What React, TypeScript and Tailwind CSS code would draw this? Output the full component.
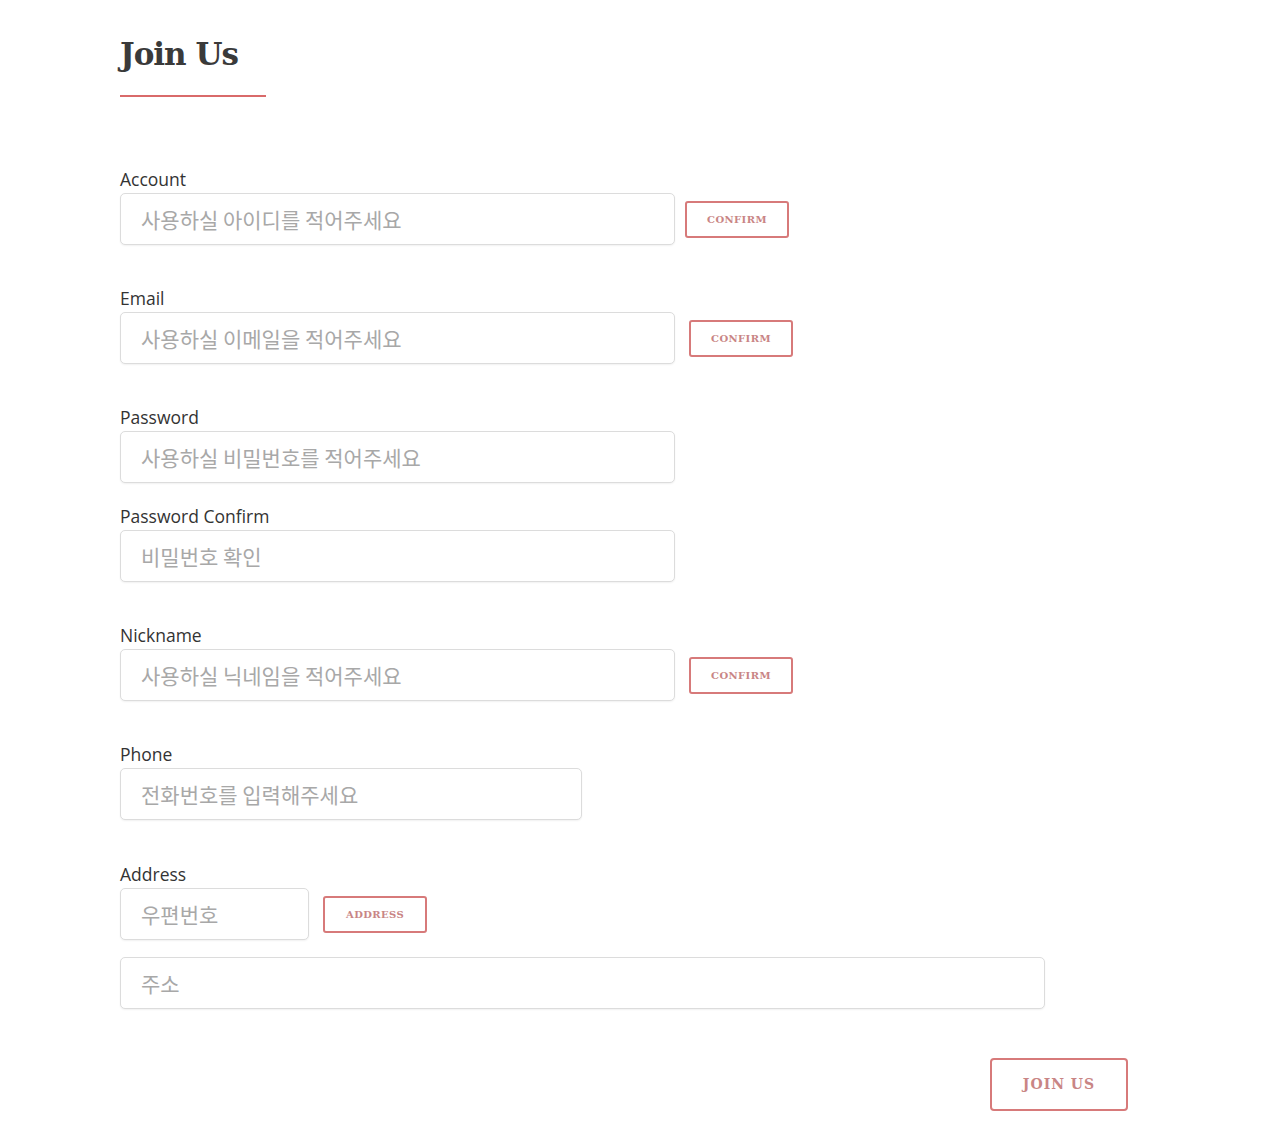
import React from "react";

const labelCls =
  "block text-[17.5px] leading-[24px] font-medium text-[#333] mb-[2px] font-['Open_Sans','Noto_Sans',sans-serif]";
const inputCls =
  "h-[52px] rounded-[5px] border border-[#dcdcdc] bg-white px-[20px] text-[21px] text-[#333] shadow-[0_1px_2px_rgba(0,0,0,0.06)] outline-none placeholder:text-[#a8a8a8] font-['Noto_Sans_CJK_KR','Noto_Sans',sans-serif]";
const smallBtn =
  "h-[37px] w-[104px] rounded-[3px] border-2 border-[#d77a7a] bg-white text-[10px] tracking-[0.4px] text-[#c98585] font-bold font-['DejaVu_Serif',serif]";

function Field({
  label,
  placeholder,
  width = "w-[555px]",
  button,
  gap = "ml-[14px]",
}: {
  label: string;
  placeholder: string;
  width?: string;
  button?: string;
  gap?: string;
}) {
  return (
    <div>
      <label className={labelCls}>{label}</label>
      <div className="flex items-center">
        <input className={`${inputCls} ${width}`} placeholder={placeholder} />
        {button && <button className={`${smallBtn} ${gap}`}>{button}</button>}
      </div>
    </div>
  );
}

export default function App() {
  return (
    <div className="min-h-[1130px] w-full bg-white pl-[120px] pt-[32px]">
      <h1 className="text-[31px] leading-[44px] font-bold text-[#3a3a3a] font-['DejaVu_Serif',serif] tracking-[-1px]">
        Join Us
      </h1>
      <div className="mt-[19px] h-[2px] w-[146px] bg-[#d96a6a]" />

      <div className="mt-[70px] flex flex-col">
        <Field
          label="Account"
          placeholder="사용하실 아이디를 적어주세요"
          button="CONFIRM"
          gap="ml-[10px]"
        />
        <div className="mt-[41px]">
          <Field label="Email" placeholder="사용하실 이메일을 적어주세요" button="CONFIRM" />
        </div>
        <div className="mt-[41px]">
          <Field label="Password" placeholder="사용하실 비밀번호를 적어주세요" />
        </div>
        <div className="mt-[21px]">
          <Field label="Password Confirm" placeholder="비밀번호 확인" />
        </div>
        <div className="mt-[41px]">
          <Field label="Nickname" placeholder="사용하실 닉네임을 적어주세요" button="CONFIRM" />
        </div>
        <div className="mt-[41px]">
          <Field label="Phone" placeholder="전화번호를 입력해주세요" width="w-[462px]" />
        </div>
        <div className="mt-[42px]">
          <Field label="Address" placeholder="우편번호" width="w-[189px]" button="ADDRESS" />
        </div>
        <div className="mt-[17px]">
          <input className={`${inputCls} w-[925px]`} placeholder="주소" />
        </div>
        <div className="mt-[49px] flex w-[1008px] justify-end">
          <button className="h-[53px] w-[138px] rounded-[4px] border-2 border-[#d77a7a] bg-white text-[14px] font-bold tracking-[1px] text-[#c98585] font-['DejaVu_Serif',serif]">
            JOIN US
          </button>
        </div>
      </div>
    </div>
  );
}
